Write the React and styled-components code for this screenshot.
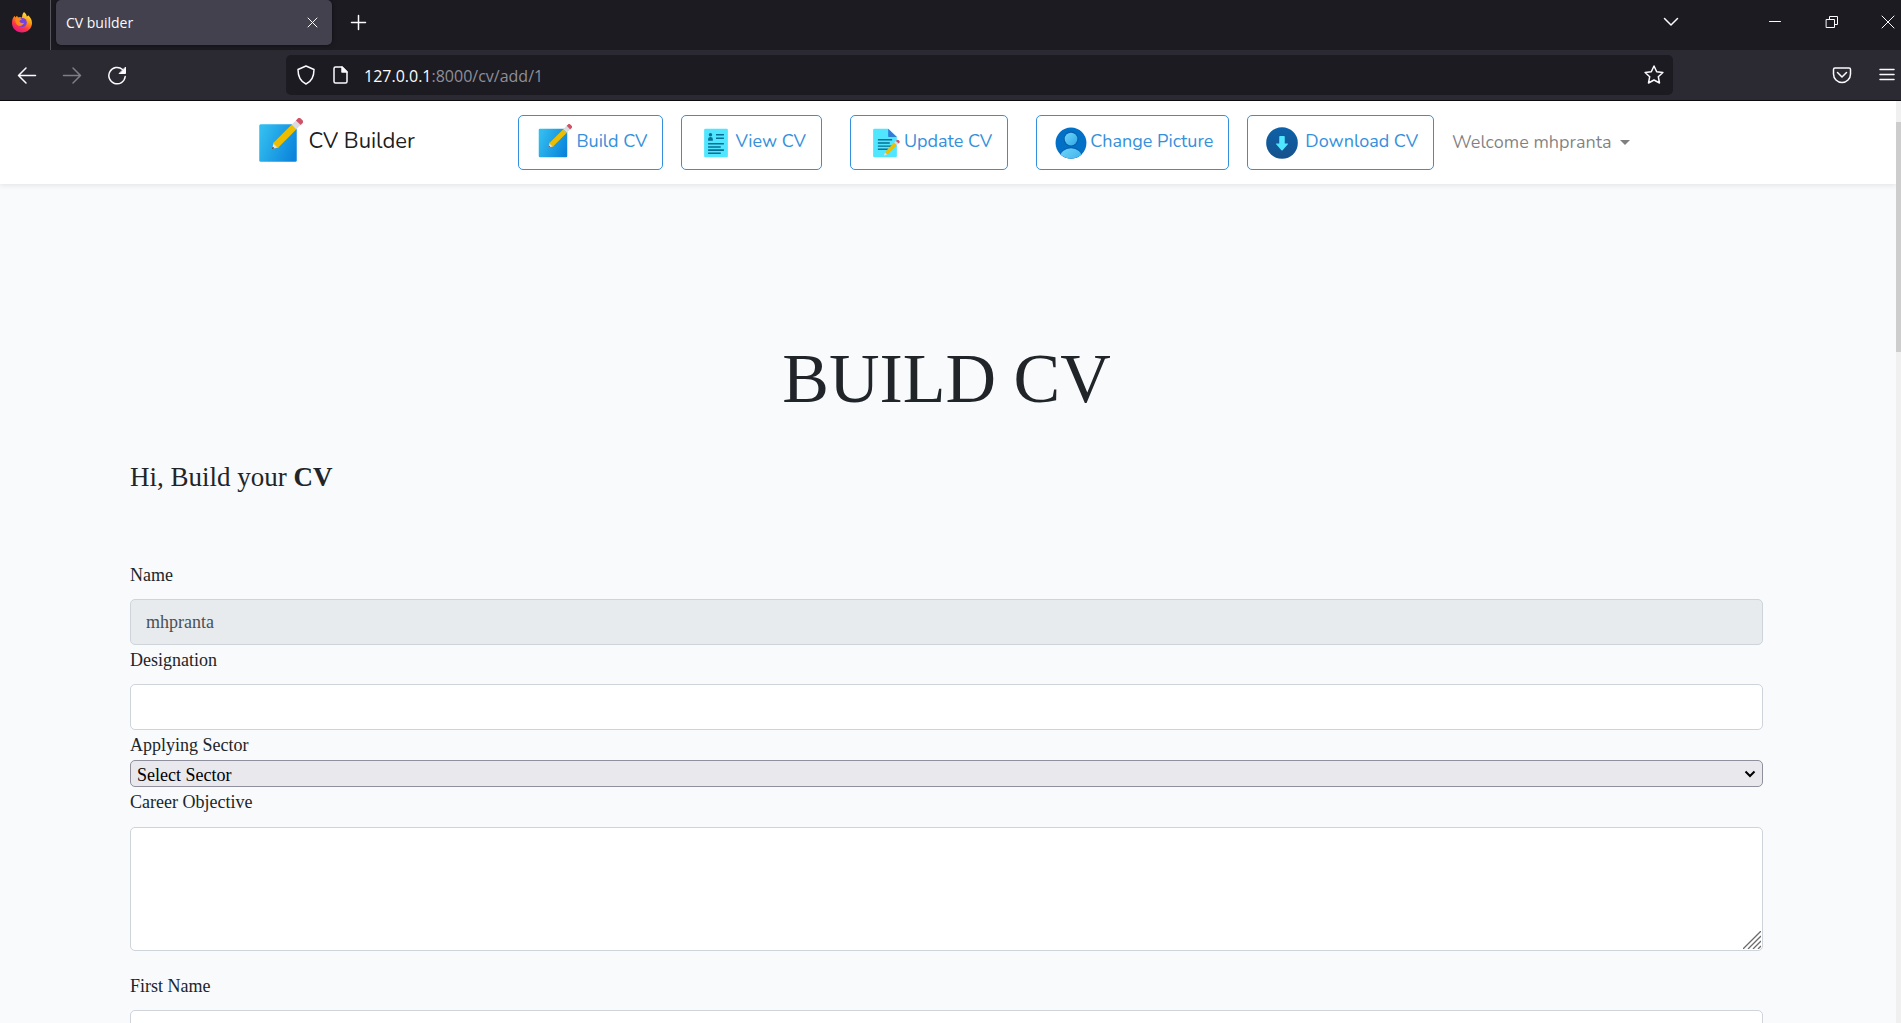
import React from "react";
import styled, { createGlobalStyle } from "styled-components";

const serif = `"Liberation Serif", "Times New Roman", serif`;
const rounded = `"Nunito", "Open Sans", sans-serif`;
const chromeFont = `"Segoe UI", "Open Sans", sans-serif`;

const GlobalStyle = createGlobalStyle`
  *, *::before, *::after { box-sizing: border-box; }
  body { margin: 0; background: #f8fafc; }
  button, input, select, textarea { font: inherit; }
`;

/* ---------- browser window ---------- */

const Window = styled.div`
  display: flex;
  flex-direction: column;
  height: 100vh;
  overflow: hidden;
`;

const TabStrip = styled.div`
  display: flex;
  align-items: center;
  flex: none;
  height: 50px;
  background: #1c1b22;
  color: #fbfbfe;
  font: 14px/20px ${chromeFont};
`;

const AppBadge = styled.div`
  display: flex;
  align-items: center;
  align-self: stretch;
  width: 51px;
  padding: 0 0 6px 11px;
  margin-right: 5px;
  border-right: 1px solid #55545c;
`;

const Tab = styled.div`
  display: flex;
  align-items: center;
  justify-content: space-between;
  align-self: flex-start;
  width: 276px;
  height: 45px;
  padding: 1px 10px 0;
  border-radius: 5px;
  background: #42414d;
  box-shadow: 0 0 4px rgba(0, 0, 0, 0.5);
`;

const ChromeButton = styled.button`
  display: flex;
  align-items: center;
  justify-content: center;
  flex: none;
  width: ${(p) => p.$width || 20}px;
  height: 40px;
  padding: 0;
  border: 0;
  background: none;
  color: inherit;
  opacity: ${(p) => (p.disabled ? 0.4 : 1)};
`;

const StripButtons = styled.div`
  display: flex;
  align-self: flex-start;
  align-items: center;
  height: 44px;
  margin-left: ${(p) => (p.$end ? "auto" : "16px")};
`;

const Toolbar = styled.div`
  display: flex;
  align-items: center;
  flex: none;
  height: 51px;
  padding: 0 4px 0 17px;
  border-bottom: 1px solid #0c0c0d;
  background: #2b2a33;
  color: #fbfbfe;
`;

const NavButtons = styled.div`
  display: flex;
  gap: 25px;
  width: 269px;
`;

const AddressBar = styled.div`
  display: flex;
  align-items: center;
  flex: 1;
  height: 40px;
  padding: 0 9px 0 10px;
  border-radius: 5px;
  background: #1c1b22;
  gap: 14px;
  font: 16px/24px ${chromeFont};
`;

const Address = styled.p`
  flex: 1;
  margin: 0;
  padding-top: 2px;
  color: #8f8f98;
`;

const Host = styled.span`
  color: #fbfbfe;
`;

const ToolbarEnd = styled.div`
  display: flex;
  justify-content: flex-end;
  gap: 25px;
  width: 224px;
`;

const Viewport = styled.div`
  display: flex;
  flex: 1;
  min-height: 0;
`;

const ScrollTrack = styled.div`
  flex: none;
  width: 5px;
  padding-top: 21px;
  background: #f0f0f0;
`;

const ScrollThumb = styled.div`
  height: 25.5%;
  background: #cdcdcd;
`;

const Page = styled.div`
  flex: 1;
  min-width: 0;
  overflow: hidden;
  background: #f8fafc;
`;

/* ---------- site header ---------- */

const Header = styled.header`
  background: #fff;
  box-shadow: 0 2px 5px rgba(0, 0, 0, 0.08);
`;

const HeaderInner = styled.div`
  display: flex;
  align-items: center;
  justify-content: space-between;
  max-width: 1425px;
  height: 83px;
  margin: 0 auto;
  padding: 0 19px 0 17px;
`;

const Brand = styled.a`
  display: flex;
  align-items: center;
  gap: 6px;
  color: rgba(0, 0, 0, 0.9);
  font: 22px/36px ${rounded};
  text-decoration: none;
`;

const LinkText = styled.span`
  padding-bottom: 3px;
`;

const Menu = styled.nav`
  display: flex;
  align-items: center;
  font: 18px/28px ${rounded};
`;

const MenuLink = styled.a`
  display: flex;
  align-items: center;
  gap: ${(p) => (p.$spaced ? 4 : 0)}px;
  height: 55px;
  padding: 0 15px;
  margin-right: ${(p) => (p.$wide ? 28 : 18)}px;
  border: 1px solid #3490dc;
  border-radius: 5px;
  color: #3490dc;
  text-decoration: none;
  white-space: nowrap;
`;

const UserMenu = styled.button`
  display: flex;
  align-items: center;
  gap: 8px;
  padding: 0 12px 1px 0;
  border: 0;
  background: none;
  color: rgba(0, 0, 0, 0.5);
  white-space: nowrap;
`;

const Caret = styled.span`
  border: 5px solid transparent;
  border-top-color: currentColor;
  border-bottom: 0;
`;

/* ---------- form ---------- */

const Main = styled.main`
  padding: 152px 133px 0 130px;
  color: #212529;
  font: 18px/29px ${serif};
`;

const Title = styled.h1`
  margin: 0;
  font-size: 70px;
  line-height: 86px;
  font-weight: 400;
  text-align: center;
`;

const Intro = styled.h2`
  margin: 38px 0 67px;
  font-size: 27px;
  line-height: 34px;
  font-weight: 400;
`;

const Field = styled.div`
  display: flex;
  flex-direction: column;
  gap: ${(p) => (p.$tight ? 0 : p.$tall ? 10 : 9)}px;
  margin-bottom: ${(p) => (p.$tall ? 21 : 1)}px;
`;

const Input = styled.input`
  width: 100%;
  height: 46px;
  padding: 0 15px;
  border: 1px solid #ced4da;
  border-radius: 5px;
  background: #fff;
  color: #495057;
  &:disabled { background: #e8ebed; }
`;

const Overlaid = styled.div`
  position: relative;
  display: flex;
`;

const Select = styled.select`
  appearance: none;
  width: 100%;
  height: 27px;
  padding: 0 6px;
  border: 1px solid #8f8f9d;
  border-radius: 5px;
  background: #e9e9ed;
  color: #000;
`;

const TextArea = styled.textarea`
  width: 100%;
  height: 124px;
  padding: 8px 15px;
  border: 1px solid #ced4da;
  border-radius: 5px;
  background: #fff;
  color: #495057;
  resize: vertical;
  &::-webkit-resizer { display: none; }
`;

const Corner = styled.svg`
  position: absolute;
  right: ${(p) => p.$inset}px;
  bottom: ${(p) => p.$rise}px;
  pointer-events: none;
`;

/* ---------- drawings ---------- */

const Line = ({ size = 20, width = 1.5, children }) => (
  <svg width={size} height={size} viewBox={`0 0 ${size} ${size}`} fill="none" stroke="currentColor"
    strokeWidth={width} strokeLinecap="round" strokeLinejoin="round" aria-hidden="true">
    {children}
  </svg>
);

const Firefox = () => (
  <svg width="22" height="22" viewBox="0 0 22 22" aria-hidden="true">
    <defs>
      <linearGradient id="fx" x1="0.8" y1="0" x2="0.3" y2="1">
        <stop offset="0" stopColor="#fff44f" />
        <stop offset="0.4" stopColor="#ff980e" />
        <stop offset="0.7" stopColor="#ff3647" />
        <stop offset="1" stopColor="#e31587" />
      </linearGradient>
    </defs>
    <path d="M13 1c2 1.500 2.600 3.200 2.800 4.500 .8-.2 1.200-.8 1.400-1.200C19.500 6.500 21 9 21 12c0 5.500-4.500 9.500-10 9.500S1 17.500 1 12c0-3 1-5.500 2.500-7.200L4.300 6.500 6 4.800l1 1.700c1.500-.3 2.800-.2 4 .3C11 4.500 11.600 2.500 13 1z" fill="url(#fx)" />
    <circle cx="11.300" cy="11.500" r="4.500" fill="#7542e5" />
    <path d="M4.500 8c2-1.500 5-1.200 6.500.6-1 .1-2 .7-2.600 1.500C9 12 11 12.500 13 11.800c-1 3.500-5.500 4.200-7.500 1.500C4.300 11.800 4 9.500 4.500 8z" fill="#ff8a16" />
  </svg>
);

const BuildIcon = ({ size = 38, id }) => (
  <svg width={size} height={size} viewBox="0 0 48 48" aria-hidden="true">
    <defs>
      <linearGradient id={id} x1="0" x2="1" y1="0.3" y2="0.7">
        <stop offset="0" stopColor="#32bdef" />
        <stop offset="1" stopColor="#0b84db" />
      </linearGradient>
    </defs>
    <rect x="6" y="6" width="36" height="36" rx="1.500" fill={`url(#${id})`} />
    <g transform="translate(18 30) rotate(-45)">
      <path d="M0 0 6-3.200V3.200z" fill="#e8dfd6" />
      <path d="M0 0 2.500-1.300V1.300z" fill="#464c55" />
      <path d="M5-3.200H30V3.200H5z" fill="#edbe00" />
      <path d="M30-3.200h6v6.400h-6z" fill="#dadce0" />
      <path d="M36-3.200h2.500q2 0 2 2v2.400q0 2-2 2H36z" fill="#d05266" />
    </g>
  </svg>
);

const ViewIcon = () => (
  <svg width="38" height="38" viewBox="0 0 48 48" aria-hidden="true">
    <rect x="9" y="6" width="30" height="36" rx="1.500" fill="#50e6ff" />
    <g fill="#057093">
      <circle cx="17" cy="13.500" r="2.200" />
      <path d="M14 21v-2q0-2.600 3-2.600t3 2.600v2z" />
      <path d="M24 12.500h10v2H24zM24 17h10v2H24zM14 24h20v2H14zM14 28h16v2H14zM14 32h20v2H14zM14 36h16v2H14z" />
    </g>
  </svg>
);

const UpdateIcon = () => (
  <svg width="38" height="38" viewBox="0 0 48 48" aria-hidden="true">
    <path d="M10.500 6H28l11 10.500v24q0 1.500-1.500 1.500h-27Q9 42 9 40.500v-33Q9 6 10.500 6z" fill="#50e6ff" />
    <path d="M28 6v9q0 1.500 1.500 1.500H39z" fill="#2f7dd8" />
    <path d="M15 19h18v1.800H15zM15 23h15v1.800H15zM15 27h18v1.800H15zM15 31h13v1.800H15z" fill="#057093" />
    <g transform="translate(22.500 40) rotate(-45)">
      <path d="M0 0 5-2.300V2.300z" fill="#e8dfd6" />
      <path d="M4-2.300H21V2.300H4z" fill="#edbe00" />
      <path d="M21-2.300h3v4.600h-3z" fill="#dadce0" />
      <path d="M24-2.300h1.500q1.500 0 1.500 1.500v1.600q0 1.500-1.500 1.500H24z" fill="#d05266" />
    </g>
  </svg>
);

const PictureIcon = () => (
  <svg width="38" height="38" viewBox="0 0 48 48" aria-hidden="true">
    <defs>
      <linearGradient id="head" x1="0" x2="1" y1="0" y2="1">
        <stop offset="0" stopColor="#70d5fb" />
        <stop offset="1" stopColor="#30a9e6" />
      </linearGradient>
      <clipPath id="disc"><circle cx="24" cy="24" r="19.500" /></clipPath>
    </defs>
    <circle cx="24" cy="24" r="19.500" fill="#0370c8" />
    <g clipPath="url(#disc)">
      <circle cx="24" cy="19" r="9.500" fill="#0560aa" />
      <ellipse cx="24" cy="43" rx="15" ry="13.500" fill="#0560aa" />
      <circle cx="24" cy="19" r="8" fill="url(#head)" />
      <ellipse cx="24" cy="43" rx="14" ry="12.500" fill="url(#head)" />
    </g>
  </svg>
);

const DownloadIcon = () => (
  <svg width="38" height="38" viewBox="0 0 48 48" aria-hidden="true">
    <defs>
      <linearGradient id="down" x1="0" x2="0" y1="0" y2="1">
        <stop offset="0" stopColor="#0d61a9" />
        <stop offset="1" stopColor="#16528c" />
      </linearGradient>
    </defs>
    <circle cx="24" cy="24" r="20" fill="url(#down)" />
    <path d="M21.500 15h5q1 0 1 1v8.500H31q1.300 0 .4 1L24.800 33q-.8.800-1.600 0L16.600 25.500q-.9-1 .4-1h3.500V16q0-1 1-1z" fill="#50e6ff" />
  </svg>
);

const menuItems = [
  { label: "Build CV", icon: <BuildIcon id="build" />, spaced: true },
  { label: "View CV", icon: <ViewIcon />, wide: true },
  { label: "Update CV", icon: <UpdateIcon />, wide: true },
  { label: "Change Picture", icon: <PictureIcon /> },
  { label: "Download CV", icon: <DownloadIcon />, spaced: true },
];

const BrowserChrome = () => (
  <>
    <TabStrip>
      <AppBadge><Firefox /></AppBadge>
      <Tab>
        CV builder
        <ChromeButton aria-label="Close tab">
          <Line width={1}><path d="M6 5l9 9M15 5l-9 9" /></Line>
        </ChromeButton>
      </Tab>
      <StripButtons>
        <ChromeButton aria-label="New tab"><Line><path d="M10.500 3.500v14M3.500 10.500h14" /></Line></ChromeButton>
      </StripButtons>
      <StripButtons $end>
        <ChromeButton $width={180} aria-label="List all tabs"><Line><path d="M3.500 6.500l6.500 6.500L16.500 6.500" /></Line></ChromeButton>
        <ChromeButton $width={28} aria-label="Minimize"><Line width={1}><path d="M4.500 9.500h11" /></Line></ChromeButton>
        <ChromeButton $width={86} aria-label="Restore">
          <Line width={1}><path d="M4.500 7.500h8v8h-8zM7.500 7.500v-3h8v8h-3" /></Line>
        </ChromeButton>
        <ChromeButton $width={26} aria-label="Close window">
          <Line width={1}><path d="M4 4l12 12M16 4L4 16" /></Line>
        </ChromeButton>
      </StripButtons>
    </TabStrip>
    <Toolbar>
      <NavButtons>
        <ChromeButton aria-label="Back"><Line><path d="M18.500 10.500H1.500M9 3L1.500 10.500 9 18" /></Line></ChromeButton>
        <ChromeButton aria-label="Forward" disabled><Line><path d="M1.500 10.500h17M11 3l7.500 7.500L11 18" /></Line></ChromeButton>
        <ChromeButton aria-label="Reload">
          <Line><path d="M18.200 11.500A8.200 8.200 0 1 1 15.500 4.500" /><path d="M18.500 2.500v6h-6z" fill="currentColor" strokeWidth="1" /></Line>
        </ChromeButton>
      </NavButtons>
      <AddressBar>
        <Line><path d="M10 1l8 3.500c0 7-2.500 12-8 14.500C4.500 16.500 2 11.500 2 4.500z" /></Line>
        <Line><path d="M12 2H5.500Q4 2 4 3.500v13Q4 18 5.500 18h10q1.500 0 1.500-1.500V7z" /><path d="M12 2v5H17z" fill="currentColor" /></Line>
        <Address><Host>127.0.0.1</Host>:8000/cv/add/1</Address>
        <ChromeButton aria-label="Bookmark this page">
          <Line><path d="M10 1l2.700 5.700 6.200.8-4.600 4.200 1.200 6.300L10 15l-5.500 3 1.200-6.300L1.100 7.500l6.200-.8z" /></Line>
        </ChromeButton>
      </AddressBar>
      <ToolbarEnd>
        <ChromeButton aria-label="Save to Pocket">
          <Line><path d="M3 3h14q1.500 0 1.500 1.500V9a8.500 8.500 0 0 1-17 0V4.500Q1.500 3 3 3z" /><path d="M5.500 7.500L10 12l4.500-4.500" /></Line>
        </ChromeButton>
        <ChromeButton aria-label="Open menu"><Line><path d="M3 4.500h14M3 9.500h14M3 14.500h14" /></Line></ChromeButton>
      </ToolbarEnd>
    </Toolbar>
  </>
);

export default function App() {
  return (
    <Window>
      <GlobalStyle />
      <BrowserChrome />
      <Viewport>
        <Page>
          <Header>
            <HeaderInner>
              <Brand href="#home"><BuildIcon size={50} id="brand" /><LinkText>CV Builder</LinkText></Brand>
              <Menu>
                {menuItems.map((item) => (
                  <MenuLink key={item.label} href="#menu" $spaced={item.spaced} $wide={item.wide}>
                    {item.icon}
                    <LinkText>{item.label}</LinkText>
                  </MenuLink>
                ))}
                <UserMenu>Welcome mhpranta<Caret /></UserMenu>
              </Menu>
            </HeaderInner>
          </Header>
          <Main>
            <Title>BUILD CV</Title>
            <Intro>Hi, Build your <b>CV</b></Intro>
            <form>
              <Field>
                <label htmlFor="name">Name</label>
                <Input id="name" defaultValue="mhpranta" disabled />
              </Field>
              <Field>
                <label htmlFor="designation">Designation</label>
                <Input id="designation" />
              </Field>
              <Field $tight>
                <label htmlFor="sector">Applying Sector</label>
                <Overlaid>
                  <Select id="sector"><option>Select Sector</option></Select>
                  <Corner $inset={7} $rise={8} width="12" height="10" fill="none" stroke="#000" strokeWidth="2" aria-hidden="true">
                    <path d="M1.500 2.500L6 7l4.500-4.500" />
                  </Corner>
                </Overlaid>
              </Field>
              <Field $tall>
                <label htmlFor="objective">Career Objective</label>
                <Overlaid>
                  <TextArea id="objective" />
                  <Corner $inset={2} $rise={2} width="18" height="18" stroke="#6b6b6b" strokeWidth="1.300" aria-hidden="true">
                    <path d="M0 18L18 0M5 18L18 5M10 18l8-8M15 18l3-3" />
                  </Corner>
                </Overlaid>
              </Field>
              <Field>
                <label htmlFor="first">First Name</label>
                <Input id="first" />
              </Field>
            </form>
          </Main>
        </Page>
        <ScrollTrack><ScrollThumb /></ScrollTrack>
      </Viewport>
    </Window>
  );
}
